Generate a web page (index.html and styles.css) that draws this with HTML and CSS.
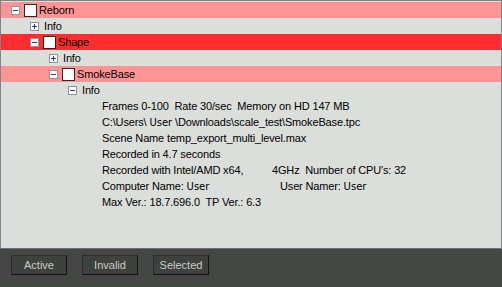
FILE: index.html
```html
<!DOCTYPE html>
<html lang="en">
<head>
    <meta charset="UTF-8">
    <title>Scene Tree</title>
    <link rel="stylesheet" href="styles.css">
</head>
<body>

    <div class="tree-panel">
        <div class="row active lvl-0">
            <span class="expander"><svg width="9" height="9"><rect x="0.5" y="0.5" width="8" height="8" fill="#fff" stroke="#8c94a6"/><path d="M2 4.5h5" stroke="#2b3c7a"/></svg></span>
            <span class="check"></span>
            <span class="label">Reborn</span>
        </div>
        <div class="row lvl-1">
            <span class="expander"><svg width="9" height="9"><rect x="0.5" y="0.5" width="8" height="8" fill="#fff" stroke="#8c94a6"/><path d="M2 4.5h5M4.5 2v5" stroke="#2b3c7a"/></svg></span>
            <span class="label info">Info</span>
        </div>
        <div class="row invalid lvl-1">
            <span class="expander"><svg width="9" height="9"><rect x="0.5" y="0.5" width="8" height="8" fill="#fff" stroke="#8c94a6"/><path d="M2 4.5h5" stroke="#2b3c7a"/></svg></span>
            <span class="check"></span>
            <span class="label">Shape</span>
        </div>
        <div class="row lvl-2">
            <span class="expander"><svg width="9" height="9"><rect x="0.5" y="0.5" width="8" height="8" fill="#fff" stroke="#8c94a6"/><path d="M2 4.5h5M4.5 2v5" stroke="#2b3c7a"/></svg></span>
            <span class="label info">Info</span>
        </div>
        <div class="row active lvl-2">
            <span class="expander"><svg width="9" height="9"><rect x="0.5" y="0.5" width="8" height="8" fill="#fff" stroke="#8c94a6"/><path d="M2 4.5h5" stroke="#2b3c7a"/></svg></span>
            <span class="check"></span>
            <span class="label">SmokeBase</span>
        </div>
        <div class="row lvl-3">
            <span class="expander"><svg width="9" height="9"><rect x="0.5" y="0.5" width="8" height="8" fill="#fff" stroke="#8c94a6"/><path d="M2 4.5h5" stroke="#2b3c7a"/></svg></span>
            <span class="label info">Info</span>
        </div>

        <div class="details">
            <div class="line">Frames 0-100&nbsp; Rate 30/sec&nbsp; Memory on HD 147 MB</div>
            <div class="line">C:\Users\ <span class="user">User</span> \Downloads\scale_test\SmokeBase.tpc</div>
            <div class="line">Scene Name temp_export_multi_level.max</div>
            <div class="line">Recorded in 4.7 seconds</div>
            <div class="line"><span class="col-a">Recorded with Intel/AMD x64,</span><span>4GHz&nbsp; Number of CPU's: 32</span></div>
            <div class="line"><span class="col-b">Computer Name: <span class="user">User</span></span><span>User Namer: <span class="user">User</span></span></div>
            <div class="line">Max Ver.: 18.7.696.0&nbsp; TP Ver.: 6.3</div>
        </div>
    </div>

    <div class="button-bar">
        <button>Active</button>
        <button>Invalid</button>
        <button>Selected</button>
    </div>

</body>
</html>
```

FILE: styles.css
```css
/* General */
body {
    margin: 0;
    width: 502px;
    height: 287px;
    background: #454745;
    font-family: "Liberation Sans", Arial, sans-serif;
    font-size: 11px;
    letter-spacing: -0.15px;
    overflow: hidden;
}

/* Tree panel */
.tree-panel {
    box-sizing: border-box;
    height: 249px;
    padding-top: 1px;
    background: #dcdedb;
    border: 1px solid #828391;
    border-bottom-color: #6d6e7a;
    color: #000;
}
.row {
    display: flex;
    align-items: center;
    height: 16px;
}
.row.active {
    background: #ff9494;
}
.row.invalid {
    background: #ff2d2d;
}
.lvl-0 { padding-left: 10px; }
.lvl-1 { padding-left: 29px; }
.lvl-2 { padding-left: 48px; }
.lvl-3 { padding-left: 67px; }

.expander {
    display: flex;
    width: 9px;
    height: 9px;
    margin-right: 4px;
}
.check {
    box-sizing: border-box;
    width: 13px;
    height: 13px;
    background: #fff;
    border: 1px solid #2a2a2a;
    margin-right: 2px;
}
.label.info {
    margin-left: 1px;
}

/* Info details */
.details {
    padding-left: 101px;
}
.details .line {
    display: flex;
    align-items: center;
    height: 16px;
    white-space: pre;
}
.col-a {
    width: 170px;
}
.col-b {
    width: 178px;
}
.user {
    font-family: "DejaVu Sans", sans-serif;
    font-size: 10px;
    letter-spacing: 0;
}

/* Bottom buttons */
.button-bar {
    display: flex;
    gap: 15px;
    padding: 6px 0 0 11px;
}
.button-bar button {
    box-sizing: border-box;
    width: 56px;
    height: 20px;
    padding: 0;
    background: #3f413f;
    color: #c9cbc9;
    font-family: "Liberation Sans", Arial, sans-serif;
    font-size: 11px;
    border: 1px solid #2c2d2c;
    border-right-color: #141414;
    border-bottom-color: #141414;
}
```
